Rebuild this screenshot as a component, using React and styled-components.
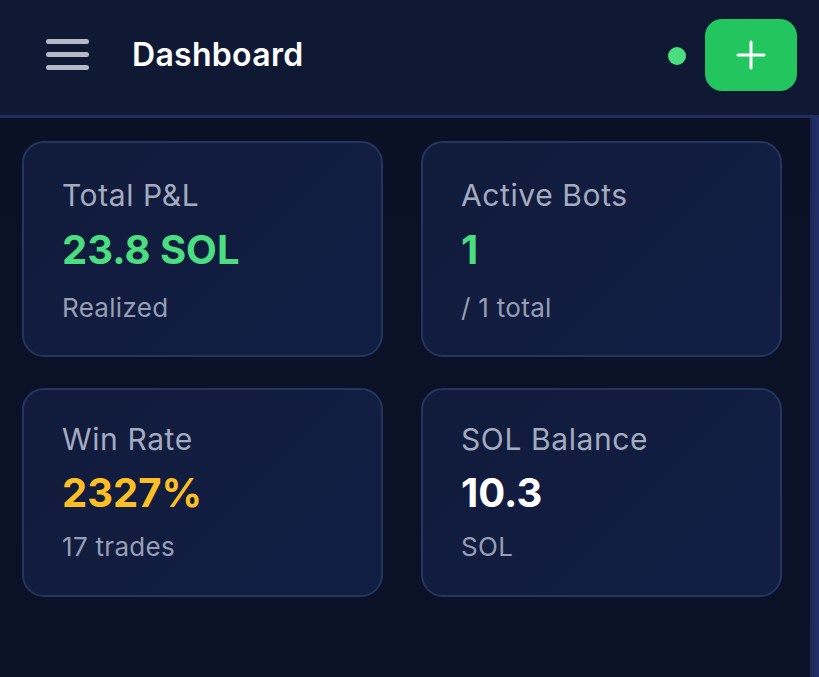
import React from "react";
import styled, { createGlobalStyle } from "styled-components";

const GlobalStyle = createGlobalStyle`
  html, body {
    margin: 0;
    padding: 0;
    height: 100%;
    background-color: #0a1022;
  }
  #root {
    height: 100%;
  }
  * {
    box-sizing: border-box;
  }
`;

const Screen = styled.div`
  height: 100vh;
  width: 100%;
  display: flex;
  flex-direction: column;
  background: linear-gradient(180deg, #0a1024 0%, #0b1228 100%);
  font-family: Inter, "Noto Sans", sans-serif;
  overflow: hidden;
`;

const TopBar = styled.header`
  height: 118px;
  flex-shrink: 0;
  display: flex;
  align-items: center;
  padding: 0 22px 6px 46px;
  background-color: #0f1934;
  border-bottom: 3px solid #1f2d5a;
`;

const Burger = styled.button`
  width: 43px;
  height: 31px;
  padding: 0;
  border: none;
  background: none;
  display: flex;
  flex-direction: column;
  justify-content: space-between;
  cursor: pointer;

  span {
    display: block;
    height: 5px;
    border-radius: 3px;
    background-color: #b4bac8;
  }
`;

const Title = styled.h1`
  margin: 0 0 0 43px;
  font-size: 32px;
  font-weight: 600;
  color: #ffffff;
  letter-spacing: 0.3px;
  flex: 1;
`;

const StatusDot = styled.span`
  width: 18px;
  height: 18px;
  border-radius: 50%;
  background-color: #4ade80;
  margin: 2px 19px 0 0;
`;

const AddButton = styled.button`
  width: 92px;
  height: 72px;
  border: none;
  border-radius: 17px;
  background-color: #22c55e;
  display: flex;
  align-items: center;
  justify-content: center;
  cursor: pointer;
`;

const Body = styled.div`
  flex: 1;
  display: flex;
`;

const Content = styled.main`
  flex: 1;
  padding: 23px 0 0 22px;
`;

const ScrollRail = styled.div`
  width: 9px;
  flex-shrink: 0;
  background: linear-gradient(90deg, #1a2756 0%, #22306a 100%);
`;

const Grid = styled.div`
  display: grid;
  grid-template-columns: 361px 361px;
  column-gap: 38px;
  row-gap: 31px;
`;

const Card = styled.section`
  border: 2px solid #26355f;
  border-radius: 22px;
  background: linear-gradient(135deg, #111b3b 0%, #111e44 100%);
  padding: ${(p) => (p.$compact ? 31 : 34)}px 38px 0;
  height: ${(p) => (p.$compact ? 209 : 216)}px;
`;

const Label = styled.div`
  font-size: 30px;
  color: #a3abc0;
  line-height: 36px;
  letter-spacing: 0.6px;
`;

const Value = styled.div`
  margin-top: ${(p) => (p.$compact ? 14 : 15)}px;
  font-size: 40px;
  font-weight: 700;
  line-height: 44px;
  letter-spacing: 0;
  color: ${(p) => p.$color};
`;

const Sub = styled.div`
  margin-top: ${(p) => (p.$compact ? 16 : 20)}px;
  font-size: 26px;
  line-height: 32px;
  letter-spacing: 0.3px;
  color: #959eb5;
`;

const stats = [
  { label: "Total P&L", value: "23.8 SOL", sub: "Realized", color: "#4ade80" },
  { label: "Active Bots", value: "1", sub: "/ 1 total", color: "#4ade80" },
  { label: "Win Rate", value: "2327%", sub: "17 trades", color: "#fbbf24" },
  { label: "SOL Balance", value: "10.3", sub: "SOL", color: "#ffffff" },
];

const App = () => (
  <Screen>
    <GlobalStyle />
    <TopBar>
      <Burger aria-label="Menu">
        <span />
        <span />
        <span />
      </Burger>
      <Title>Dashboard</Title>
      <StatusDot />
      <AddButton aria-label="Add">
        <svg width="30" height="30" viewBox="0 0 30 30">
          <path d="M15 2v26M2 15h26" stroke="#fff" strokeWidth="3" strokeLinecap="round" />
        </svg>
      </AddButton>
    </TopBar>
    <Body>
      <Content>
        <Grid>
          {stats.map((s, i) => {
            const compact = i >= 2;
            return (
              <Card key={s.label} $compact={compact}>
                <Label>{s.label}</Label>
                <Value $color={s.color} $compact={compact}>
                  {s.value}
                </Value>
                <Sub $compact={compact}>{s.sub}</Sub>
              </Card>
            );
          })}
        </Grid>
      </Content>
      <ScrollRail />
    </Body>
  </Screen>
);

export default App;
